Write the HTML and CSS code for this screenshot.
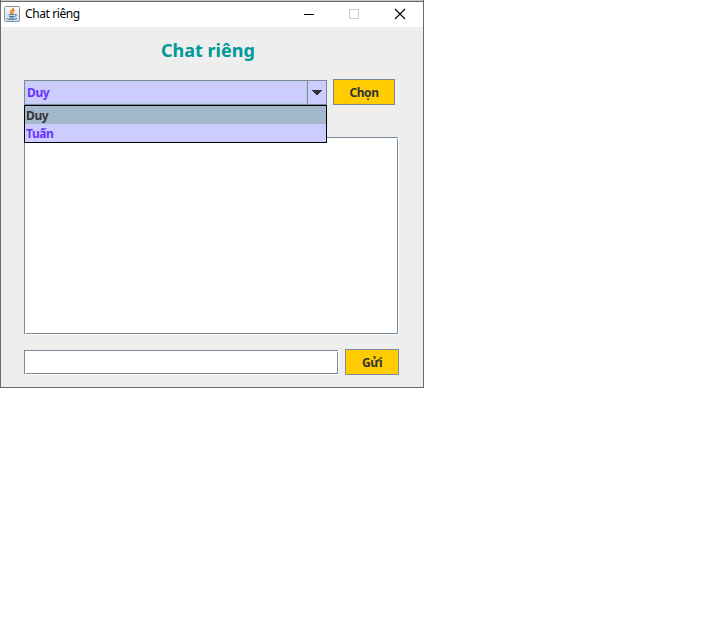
FILE: index.html
```
<!DOCTYPE html>
<html lang="vi">
<head>
<meta charset="utf-8">
<title>Chat riêng</title>
<link rel="stylesheet" href="styles.css">
</head>
<body>
<main class="window">
  <header class="titlebar">
    <svg class="app-icon" width="16" height="16" viewBox="0 0 16 16">
      <defs><linearGradient id="tile" x2="0" y2="1"><stop stop-color="#fff"/><stop offset="1" stop-color="#c9d5df"/></linearGradient></defs>
      <rect x=".5" y=".5" width="15" height="15" rx="1" fill="url(#tile)" stroke="#8295a5"/>
      <path d="M8.800 1.800C10.500 4 5.800 4.300 6.500 6c.2.700 1 1 1.200 1.900M10.500 4.200C7.500 5.300 9.800 6.200 8.500 7.900" fill="none" stroke="#ee7d1b" stroke-width="1.500"/>
      <path d="M4.500 8.700h6M5.200 10.500h4.800M11 8.500c2.200-.5 1.500 1.700-.3 2M3 12c-.8 1.800 8.500 1.800 10 .2M5.500 12h4.500" fill="none" stroke="#41749a"/>
    </svg>
    <span class="caption">Chat riêng</span>
    <svg class="controls" width="110" height="16" viewBox="0 0 110 16" shape-rendering="crispEdges">
      <path d="M4 6.500h10" stroke="#000"/>
      <rect x="49.500" y="1.500" width="9" height="9" fill="none" stroke="#ccc"/>
      <path d="M95 1l10 10M105 1L95 11" stroke="#000" stroke-width="1.100" shape-rendering="auto"/>
    </svg>
  </header>
  <section class="content">
    <h1 class="heading">Chat riêng</h1>
    <div class="picker">
      <div class="combo">
        <span class="combo-value">Duy</span>
        <span class="combo-arrow"><svg width="10" height="5" viewBox="0 0 10 5" shape-rendering="crispEdges"><path d="M0 0h10v1H9v1H8v1H7v1H6v1H4V4H3V3H2V2H1V1H0z" fill="#333"/></svg></span>
        <ul class="options">
          <li class="option selected">Duy</li>
          <li class="option">Tuấn</li>
        </ul>
      </div>
      <button class="button choose">Chọn</button>
    </div>
    <div class="messages etched"></div>
    <div class="composer">
      <div class="message-input etched"></div>
      <button class="button send">Gửi</button>
    </div>
  </section>
</main>
</body>
</html>
```
FILE: styles.css
```
* { box-sizing: border-box; }
body {
  margin: 0;
  background: #fff;
  font-family: "Noto Sans", sans-serif;
}
.window {
  width: 424px;
  height: 388px;
  background: #eee;
  border: 1px solid #696969;
  border-top: 0;
}
.titlebar {
  display: flex;
  height: 27px;
  padding-left: 3px;
  background: #fff;
  border-top: 1px solid #c8c8c8;
  box-shadow: inset 0 1px #696969;
}
.app-icon { margin-top: 5px; }
.caption {
  margin-left: 5px;
  font-size: 12px;
  line-height: 26px;
  letter-spacing: -0.4px;
  color: #000;
}
.controls { margin: 7px 13px 0 auto; }
.content { padding: 0 23px; }
.heading {
  margin: 0;
  height: 52px;
  padding-left: 137px;
  font-size: 18px;
  line-height: 47px;
  letter-spacing: 0;
  color: #099;
  white-space: nowrap;
}
.picker {
  display: flex;
  align-items: flex-end;
  gap: 6px;
  height: 26px;
  font-size: 12px;
  font-weight: 700;
  letter-spacing: -0.4px;
}
.combo {
  position: relative;
  display: flex;
  width: 303px;
  height: 25px;
  background: #ccf;
  border: 1px solid #7a8a99;
  color: #63f;
}
.combo-value {
  flex: 1;
  padding-left: 2px;
  line-height: 23px;
  box-shadow: inset 1px 1px #b8cfe5, inset -1px -1px #b8cfe5;
}
.combo-arrow {
  display: flex;
  align-items: center;
  justify-content: center;
  width: 19px;
  border-left: 1px solid #7a8a99;
}
.options {
  position: absolute;
  z-index: 1;
  top: 24px;
  left: -1px;
  width: 303px;
  margin: 0;
  padding: 0;
  list-style: none;
  background: #ccf;
  border: 1px solid #000;
}
.option {
  height: 18px;
  padding-left: 1px;
  line-height: 19px;
}
.selected { background: #a3b8cc; color: #333; }
.button {
  height: 26px;
  padding: 2px 0 0;
  background: #fc0;
  border: 1px solid #7a8a99;
  border-radius: 0;
  color: #333;
  font: 700 12px/22px "Noto Sans", sans-serif;
  letter-spacing: -0.4px;
}
.choose { width: 62px; }
.send { width: 54px; }
.etched {
  position: relative;
  background: #fff;
  border: 1px solid #7a8a99;
  box-shadow: 1px 1px #fff;
}
/* Open corners of the etched frame */
.etched::before,
.etched::after {
  content: "";
  position: absolute;
  width: 1px;
  height: 1px;
  background: #eee;
}
.etched::before { top: 0; right: -1px; }
.etched::after { bottom: -1px; left: 0; }
.messages {
  width: 374px;
  height: 197px;
  margin-top: 32px;
}
.composer {
  display: flex;
  align-items: center;
  gap: 7px;
  margin-top: 15px;
}
.message-input { width: 314px; height: 24px; }
```
